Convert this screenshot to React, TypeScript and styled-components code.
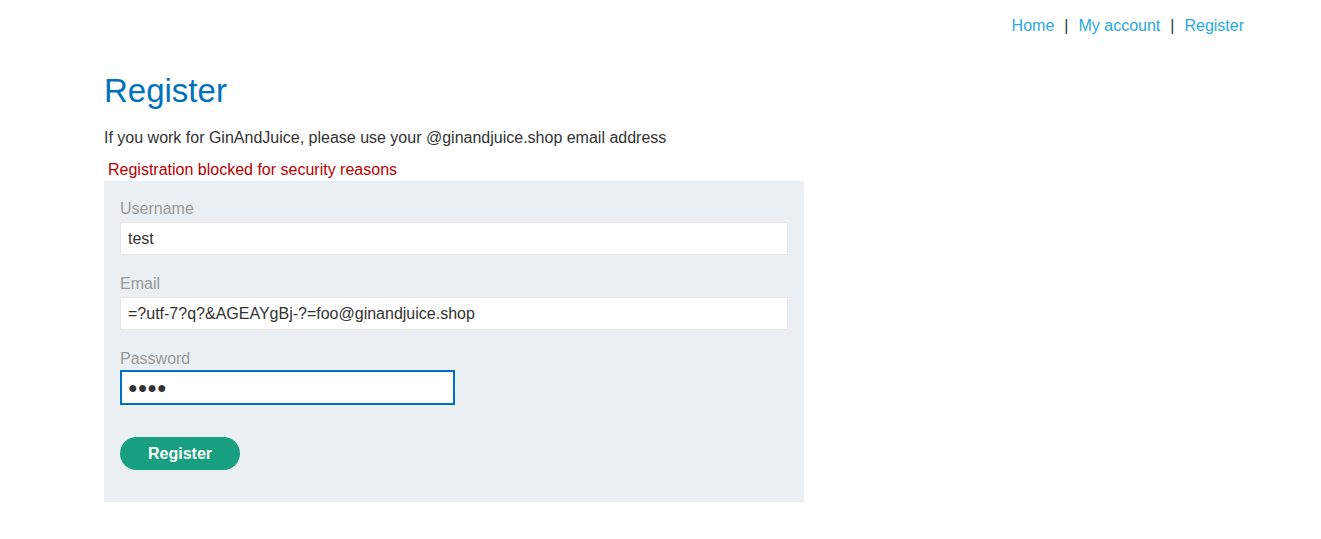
import React from "react";
import styled, { createGlobalStyle } from "styled-components";

const Global = createGlobalStyle`
  html, body { margin: 0; padding: 0; background: #fff; }
  body { font-family: "Liberation Sans", Arial, sans-serif; font-size: 16px; color: #333; }
  * { box-sizing: border-box; }
`;

const Page = styled.div`
  display: flex;
  flex-direction: column;
`;

const Nav = styled.nav`
  display: flex;
  justify-content: flex-end;
  align-items: center;
  gap: 10px;
  padding: 16px 77px 0 0;
  height: 36px;
  line-height: 20px;
`;

const NavLink = styled.a`
  color: #29a9e1;
  text-decoration: none;
`;

const Sep = styled.span`
  color: #333;
`;

const Main = styled.main`
  padding: 0 0 0 104px;
  display: flex;
  flex-direction: column;
`;

const Title = styled.h1`
  margin: 35px 0 0;
  font-size: 33px;
  font-weight: 400;
  line-height: 40px;
  color: #0071bc;
`;

const Intro = styled.p`
  margin: 15px 0 0;
  line-height: 24px;
`;

const ErrorText = styled.p`
  margin: 9px 0 0;
  line-height: 22px;
  color: #b50000;
  padding-left: 4px;
`;

const FormBox = styled.form`
  width: 700px;
  background: #e9eff2;
  padding: 18px 16px 32px;
  display: flex;
  flex-direction: column;
`;

const Label = styled.label<{ $first?: boolean }>`
  color: #999;
  line-height: 20px;
  margin-top: ${(p) => (p.$first ? "0" : "19px")};
  margin-bottom: 3px;
`;

const Input = styled.input<{ $focused?: boolean; $half?: boolean }>`
  height: ${(p) => (p.$focused ? "35px" : "33px")};
  width: ${(p) => (p.$half ? "335px" : "100%")};
  margin-top: ${(p) => (p.$focused ? "-2px" : "0")};
  border: ${(p) => (p.$focused ? "2px solid #0071c1" : "1px solid #e6e6e6")};
  background: #fff;
  padding: 0 ${(p) => (p.$focused ? "6px" : "7px")};
  font-family: "Liberation Sans", Arial, sans-serif;
  font-size: 16px;
  color: #333;
  outline: none;
  border-radius: 0;
`;

const Button = styled.button`
  margin-top: 32px;
  align-self: flex-start;
  width: 120px;
  height: 33px;
  border: none;
  border-radius: 17px;
  background: #189f80;
  color: #fff;
  font-family: "Liberation Sans", Arial, sans-serif;
  font-weight: 700;
  font-size: 16px;
  cursor: pointer;
`;

export default function App() {
  return (
    <Page>
      <Global />
      <Nav>
        <NavLink href="#">Home</NavLink>
        <Sep>|</Sep>
        <NavLink href="#">My account</NavLink>
        <Sep>|</Sep>
        <NavLink href="#">Register</NavLink>
      </Nav>
      <Main>
        <Title>Register</Title>
        <Intro>If you work for GinAndJuice, please use your @ginandjuice.shop email address</Intro>
        <ErrorText>Registration blocked for security reasons</ErrorText>
        <FormBox onSubmit={(e) => e.preventDefault()}>
          <Label $first>Username</Label>
          <Input defaultValue="test" />
          <Label>Email</Label>
          <Input defaultValue="=?utf-7?q?&AGEAYgBj-?=foo@ginandjuice.shop" />
          <Label>Password</Label>
          <Input aria-label="Password" defaultValue="●●●●" readOnly $focused $half />
          <Button type="submit">Register</Button>
        </FormBox>
      </Main>
    </Page>
  );
}
